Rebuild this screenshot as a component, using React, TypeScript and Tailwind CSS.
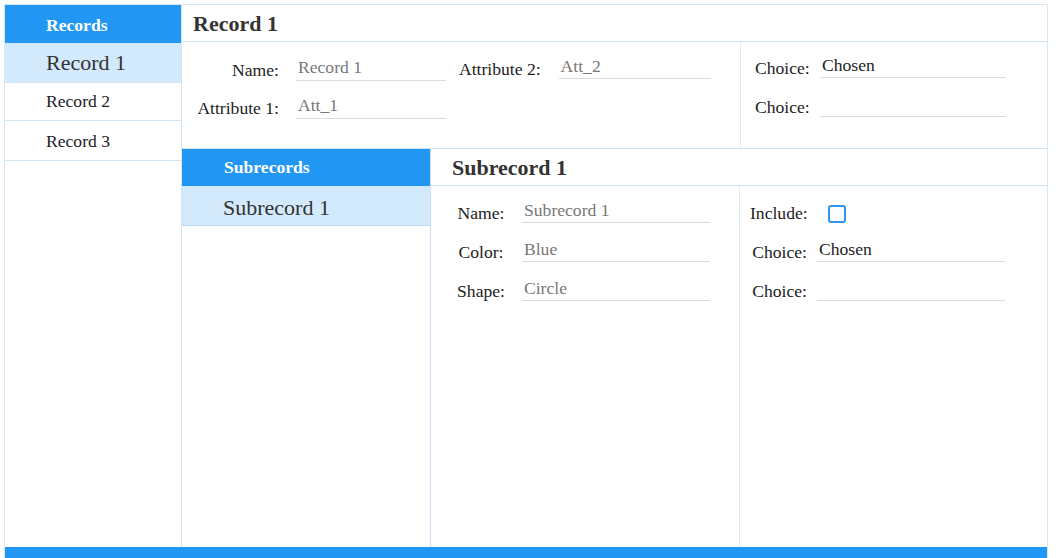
const BLUE = 'bg-[#2196f3]'

function Field({ value, dark, className }: { value: string; dark?: boolean; className: string }) {
  return (
    <div className={`border-b border-[#dcdcdc] pl-[2px] leading-[20px] ${dark ? 'text-[#222]' : 'text-[#777]'} ${className}`}>
      {value}
    </div>
  )
}

export default function App() {
  return (
    <div className="w-[1056px] h-[558px] overflow-hidden bg-white font-['Liberation_Serif',serif] text-[17.6px] text-[#222]">
      <div className="ml-[4px] mt-[4px] w-[1044px] border border-[#d6e7f6] flex flex-col">
        <div className="flex h-[542px]">
          {/* records list */}
          <aside className="w-[177px] shrink-0 border-r border-[#d3e5f5] flex flex-col">
            <div className={`h-[38px] ${BLUE} text-white font-bold pl-[41px] pt-[2px] flex items-center`}>Records</div>
            <div className="h-[40px] bg-[#d3e9fc] text-[22px] text-[#333] pl-[41px] flex items-center border-b border-[#d3e5f5]">Record 1</div>
            <div className="h-[38px] pl-[41px] flex items-center border-b border-[#d3e5f5]">Record 2</div>
            <div className="h-[40px] pl-[41px] pt-[2px] flex items-center border-b border-[#d3e5f5]">Record 3</div>
          </aside>

          <main className="flex-1 flex flex-col">
            <div className="h-[37px] border-b border-[#d3e5f5] flex items-center pl-[11px] text-[22px] font-bold text-[#333]">Record 1</div>

            {/* record form */}
            <div className="h-[107px] flex border-b border-[#d3e5f5]">
              <div className="w-[558px] flex">
                <div className="pt-[15px]">
                  <div className="h-[38px] flex items-start">
                    <div className="w-[97px] text-right mt-[3px] leading-[20px]">Name:</div>
                    <Field value="Record 1" className="ml-[17px] w-[150px] h-[24px]" />
                  </div>
                  <div className="h-[38px] flex items-start">
                    <div className="w-[97px] text-right mt-[3px] leading-[20px]">Attribute 1:</div>
                    <Field value="Att_1" className="ml-[17px] w-[150px] h-[24px]" />
                  </div>
                </div>
                <div className="pt-[14px] pl-[13px]">
                  <div className="h-[38px] flex items-start">
                    <div className="mt-[3px] leading-[20px]">Attribute 2:</div>
                    <Field value="Att_2" className="ml-[18px] w-[152px] h-[23px]" />
                  </div>
                </div>
              </div>
              <div className="flex-1 border-l border-[#deecf8] pt-[13px] pl-[14px]">
                <div className="h-[39px] flex items-start">
                  <div className="w-[53px] text-right mt-[3px] leading-[20px]">Choice:</div>
                  <Field value="Chosen" dark className="ml-[12px] w-[186px] h-[23px]" />
                </div>
                <div className="h-[39px] flex items-start">
                  <div className="w-[53px] text-right mt-[3px] leading-[20px]">Choice:</div>
                  <Field value="" className="ml-[12px] w-[186px] h-[23px]" />
                </div>
              </div>
            </div>

            {/* subrecords */}
            <div className="flex-1 flex">
              <div className="w-[249px] shrink-0 border-r border-[#c9e0f5] flex flex-col">
                <div className={`h-[37px] ${BLUE} text-white font-bold pl-[42px] flex items-center`}>Subrecords</div>
                <div className="h-[40px] bg-[#d3e9fc] text-[22px] text-[#333] pl-[41px] pt-[3px] flex items-center border-b border-[#b9dbf7]">Subrecord 1</div>
              </div>
              <div className="flex-1 flex flex-col">
                <div className="h-[37px] border-b border-[#d3e5f5] flex items-center pl-[21px] text-[22px] font-bold text-[#333]">Subrecord 1</div>
                <div className="flex-1 flex">
                  <div className="w-[309px] border-r border-[#deecf8] pt-[14px] pl-[10px]">
                    {[['Name:', 'Subrecord 1'], ['Color:', 'Blue'], ['Shape:', 'Circle']].map(([l, v]) => (
                      <div key={l} className="h-[39px] flex items-start">
                        <div className="w-[80px] text-center mt-[3px] leading-[20px]">{l}</div>
                        <Field value={v} className="ml-[1px] w-[188px] h-[23px]" />
                      </div>
                    ))}
                  </div>
                  <div className="flex-1 pt-[14px] pl-[10px]">
                    <div className="h-[39px] flex items-start">
                      <div className="w-[57px] text-right mt-[3px] leading-[20px]">Include:</div>
                      <div className="ml-[21px] mt-[5px] w-[18px] h-[18px] rounded-[3px] border-2 border-[#2f96f0]" />
                    </div>
                    <div className="h-[39px] flex items-start">
                      <div className="w-[57px] text-right mt-[3px] leading-[20px]">Choice:</div>
                      <Field value="Chosen" dark className="ml-[10px] w-[188px] h-[23px]" />
                    </div>
                    <div className="h-[39px] flex items-start">
                      <div className="w-[57px] text-right mt-[3px] leading-[20px]">Choice:</div>
                      <Field value="" className="ml-[10px] w-[188px] h-[23px]" />
                    </div>
                  </div>
                </div>
              </div>
            </div>
          </main>
        </div>
        <div className={`h-[14px] ${BLUE}`} />
      </div>
    </div>
  )
}
